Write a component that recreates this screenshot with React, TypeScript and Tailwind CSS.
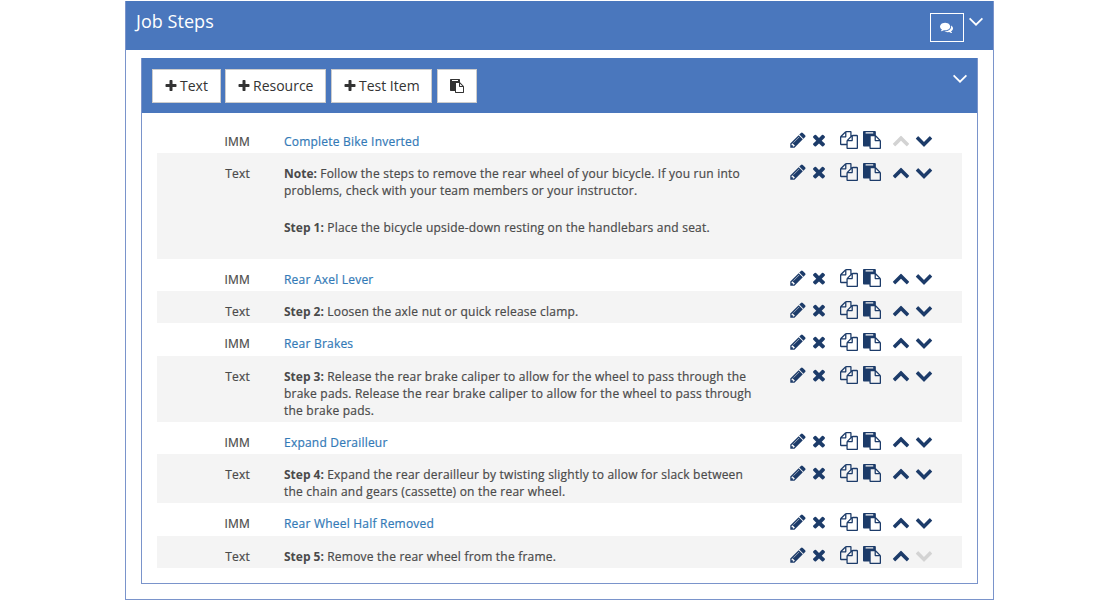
import type { ReactNode } from "react";

const PATHS = {
  pencil:
    "M491 1536l91-91-235-235-91 91v107h128v128h107zm523-928q0-22-22-22-10 0-17 7l-542 542q-7 7-7 17 0 22 22 22 10 0 17-7l542-542q7-7 7-17zm-54-192l416 416-832 832h-416v-416zm683 96q0 53-37 90l-166 166-416-416 166-165q36-38 90-38 53 0 91 38l235 234q37 39 37 91z",
  times:
    "M1490 1322q0 40-28 68l-136 136q-28 28-68 28t-68-28l-294-294-294 294q-28 28-68 28t-68-28l-136-136q-28-28-28-68t28-68l294-294-294-294q-28-28-28-68t28-68l136-136q28-28 68-28t68 28l294 294 294-294q28-28 68-28t68 28l136 136q28 28 28 68t-28 68l-294 294 294 294q28 28 28 68z",
  copy:
    "M1696 384q40 0 68 28t28 68v1216q0 40-28 68t-68 28h-960q-40 0-68-28t-28-68v-288h-544q-40 0-68-28t-28-68v-672q0-40 20-88t48-76l408-408q28-28 76-48t88-20h416q40 0 68 28t28 68v328q68-40 128-40h416zm-544 213l-299 299h299v-299zm-640-384l-299 299h299v-299zm196 647l316-316v-416h-384v416q0 40-28 68t-68 28h-416v640h512v-256q0-40 20-88t48-76zm956 804v-1152h-384v416q0 40-28 68t-68 28h-416v640h896z",
  paste:
    "M768 1664h896v-640h-416q-40 0-68-28t-28-68v-416h-384v1152zm256-1440v-64q0-13-9.5-22.5t-22.5-9.5h-704q-13 0-22.5 9.5t-9.5 22.5v64q0 13 9.5 22.5t22.5 9.5h704q13 0 22.5-9.5t9.5-22.5zm256 672h299l-299-299v299zm512 128v672q0 40-28 68t-68 28h-960q-40 0-68-28t-28-68v-160h-544q-40 0-68-28t-28-68v-1344q0-40 28-68t68-28h1088q40 0 68 28t28 68v328q21 13 36 28l408 408q28 28 48 76t20 88z",
  up: "M1683 1331l-166 165q-19 19-45 19t-45-19l-531-531-531 531q-19 19-45 19t-45-19l-166-165q-19-19-19-45.5t19-45.5l742-741q19-19 45-19t45 19l742 741q19 19 19 45.5t-19 45.5z",
  down: "M1683 808l-742 741q-19 19-45 19t-45-19l-742-741q-19-19-19-45.5t19-45.5l166-165q19-19 45-19t45 19l531 531 531-531q19-19 45-19t45 19l166 165q19 19 19 45.5t-19 45.5z",
  plus: "M1600 736v192q0 40-28 68t-68 28h-416v416q0 40-28 68t-68 28h-192q-40 0-68-28t-28-68v-416h-416q-40 0-68-28t-28-68v-192q0-40 28-68t68-28h416v-416q0-40 28-68t68-28h192q40 0 68 28t28 68v416h416q40 0 68 28t28 68z",
  comments:
    "M1408 768q0 139-94 257t-256.5 186.5-353.5 68.5q-86 0-176-16-124 88-278 128-36 9-86 16h-3q-11 0-20.5-8t-11.5-21q-1-3-1-6.5t.5-6.5 2-6l2.5-5 3.5-5.5 4-5 4.5-5 4-4.5q5-6 23-25t26-29.5 22.5-29 25-38.5 20.5-44q-124-72-195-177t-71-224q0-139 94-257t256.5-186.5 353.5-68.5 353.5 68.5 256.5 186.5 94 257zm384 256q0 120-71 224.5t-195 176.5q10 24 20.5 44t25 38.5 22.5 29 26 29.5 23 25q1 1 4 4.5t4.5 5 4 5 3.5 5.5l2.5 5 2 6 .5 6.5-1 6.5q-3 14-13 22t-22 7q-50-7-86-16-154-40-278-128-90 16-176 16-271 0-472-132 58 4 88 4 161 0 309-45t264-129q125-92 192-212t67-254q0-77-23-152 129 71 204 178t75 230z",
};

function Icon({ name, className }: { name: keyof typeof PATHS; className: string }) {
  return (
    <svg viewBox="0 0 1792 1792" fill="currentColor" className={`shrink-0 ${className}`}>
      <path d={PATHS[name]} />
    </svg>
  );
}

function ThinChevron({ className }: { className: string }) {
  return (
    <svg viewBox="0 0 14 9" fill="none" stroke="white" strokeWidth="1.7" className={`h-[9px] w-[14px] shrink-0 ${className}`}>
      <path d="M0.6 1.3L7 7.7L13.4 1.3" />
    </svg>
  );
}

function ToolButton({ className, children }: { className: string; children: ReactNode }) {
  return (
    <button className={`flex h-[34px] items-center border border-[#ccc] bg-white pl-3 text-[14px] leading-5 text-[#333] ${className}`}>
      {children}
    </button>
  );
}

type Row = { height: string; link?: string; body?: ReactNode };

const rows: Row[] = [
  { height: "h-8", link: "Complete Bike Inverted" },
  {
    height: "h-[106px]",
    body: (
      <>
        <p>
          <Label>Note:</Label> Follow the steps to remove the rear wheel of your bicycle. If you run into
          <br />
          problems, check with your team members or your instructor.
        </p>
        <p className="mt-5">
          <Label>Step 1:</Label> Place the bicycle upside-down resting on the handlebars and seat.
        </p>
      </>
    ),
  },
  { height: "h-8", link: "Rear Axel Lever" },
  { height: "h-8", body: <p><Label>Step 2:</Label> Loosen the axle nut or quick release clamp.</p> },
  { height: "h-[33px]", link: "Rear Brakes" },
  {
    height: "h-[66px]",
    body: (
      <p>
        <Label>Step 3:</Label> Release the rear brake caliper to allow for the wheel to pass through the
        <br />
        brake pads. Release the rear brake caliper to allow for the wheel to pass through
        <br />
        the brake pads.
      </p>
    ),
  },
  { height: "h-8", link: "Expand Derailleur" },
  {
    height: "h-[49px]",
    body: (
      <p>
        <Label>Step 4:</Label> Expand the rear derailleur by twisting slightly to allow for slack between
        <br />
        the chain and gears (cassette) on the rear wheel.
      </p>
    ),
  },
  { height: "h-[33px]", link: "Rear Wheel Half Removed" },
  { height: "h-8", body: <p><Label>Step 5:</Label> Remove the rear wheel from the frame.</p> },
];

function Label({ children }: { children: ReactNode }) {
  return <b className="font-bold tracking-normal [-webkit-text-stroke:0]">{children}</b>;
}

function StepRow({ row, first, last }: { row: Row; first: boolean; last: boolean }) {
  return (
    <div className={`flex items-start text-[12px] leading-[17px] tracking-[0.215px] text-[#4a4a4a] [-webkit-text-stroke:0.2px] ${row.height} ${row.link ? "" : "bg-[#f4f4f4]"}`}>
      <div className="w-[93px] shrink-0 pt-3 text-right">{row.link ? "IMM" : "Text"}</div>
      <div className="ml-[34px] w-[505px] shrink-0 pt-3 whitespace-nowrap">
        {row.link ? <a className="text-[#337ab7]">{row.link}</a> : row.body}
      </div>
      <div className="flex pt-[9.5px] text-[#1c3b69]">
        <Icon name="pencil" className="h-[18px] w-[18px]" />
        <Icon name="times" className="ml-[3px] h-[18px] w-[18px]" />
        <Icon name="copy" className="ml-[11.5px] h-[18px] w-[18px]" />
        <Icon name="paste" className="ml-[5px] h-[18px] w-[18px]" />
        <Icon name="up" className={`ml-[11.5px] h-[18px] w-[18px] ${first ? "text-[#d3d3d3]" : ""}`} />
        <Icon name="down" className={`ml-[5px] h-[18px] w-[18px] ${last ? "text-[#d3d3d3]" : ""}`} />
      </div>
    </div>
  );
}

export default function App() {
  return (
    <div className="h-[601px] overflow-hidden bg-white pt-px pl-[125px] font-['Open_Sans',sans-serif]">
      <section className="h-[599px] w-[869px] border border-t-0 border-[#7a94cb]">
        <header className="flex h-[49px] items-start bg-[#4a77bd] pr-[10px] pl-[10px]">
          <h1 className="pt-2 text-[18px] leading-6 tracking-[0.05px] text-white">Job Steps</h1>
          <button className="mt-3 ml-auto flex h-[29px] w-[34px] items-center justify-center border border-white text-white">
            <Icon name="comments" className="mr-px h-[13px] w-[13px]" />
          </button>
          <ThinChevron className="mt-4 ml-[5px]" />
        </header>
        <section className="mt-2 ml-[15px] h-[526px] w-[837px] border border-t-0 border-[#7a94cb]">
          <div className="flex h-[55px] items-start bg-[#4a77bd] pt-[11px] pr-[10px] pl-[10px]">
            <ToolButton className="w-[69px]">
              <Icon name="plus" className="-ml-px h-[14px] w-[14px]" />
              <span className="ml-[2px]">Text</span>
            </ToolButton>
            <ToolButton className="ml-1 w-[101px]">
              <Icon name="plus" className="-ml-px h-[14px] w-[14px]" />
              <span className="ml-[2px]">Resource</span>
            </ToolButton>
            <ToolButton className="ml-[5px] w-[101px]">
              <Icon name="plus" className="-ml-px h-[14px] w-[14px]" />
              <span className="ml-[2px]">Test Item</span>
            </ToolButton>
            <ToolButton className="ml-[5px] w-10">
              <Icon name="paste" className="h-[14px] w-[14px]" />
            </ToolButton>
            <ThinChevron className="mt-[5px] ml-auto" />
          </div>
          <div className="px-[15px] pt-2">
            {rows.map((row, i) => (
              <StepRow key={i} row={row} first={i === 0} last={i === rows.length - 1} />
            ))}
          </div>
        </section>
      </section>
    </div>
  );
}
